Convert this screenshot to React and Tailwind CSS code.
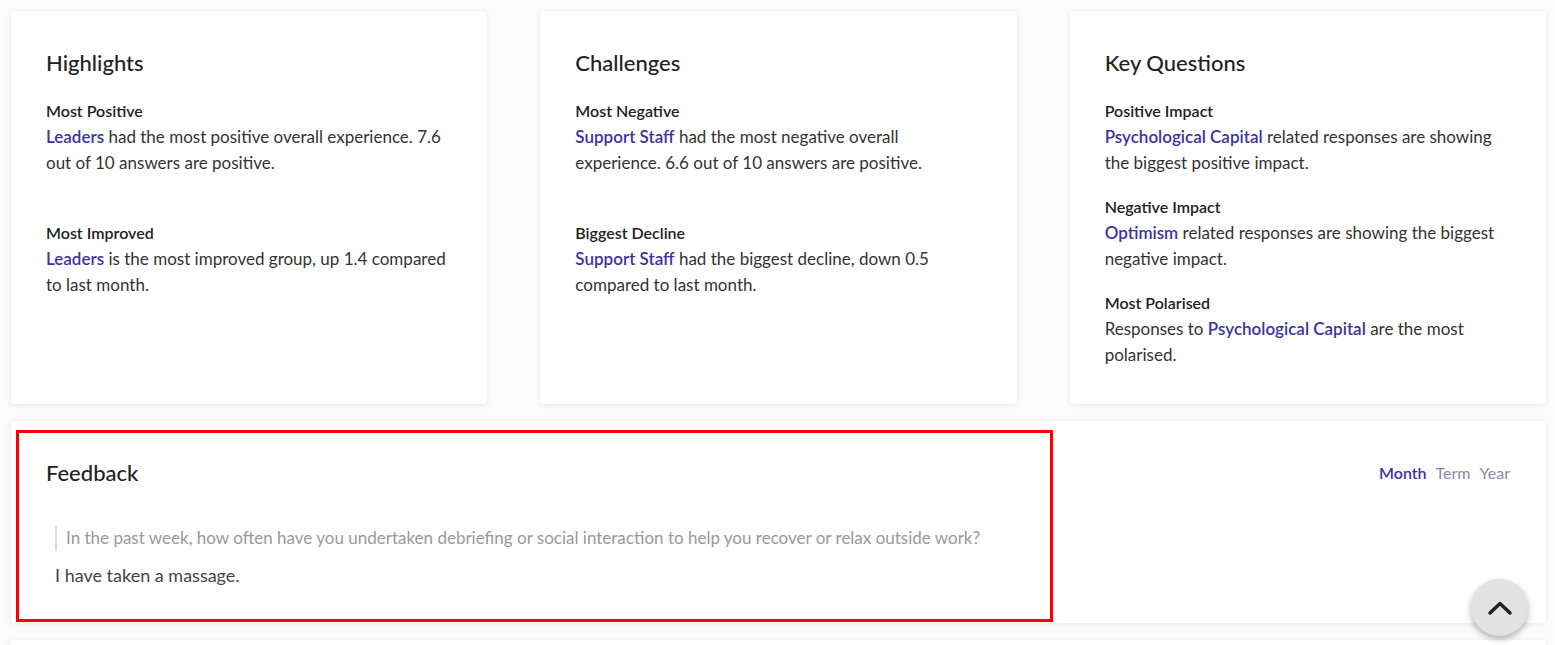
import React from "react";

const L = ({ children }) => (
  <span className="text-[#3d33a0] font-semibold">{children}</span>
);

function Section({ title, children, mb }) {
  return (
    <div className={mb}>
      <div className="text-[16px] leading-[26px] font-semibold text-[#222]">{title}</div>
      <p className="text-[17px] leading-[26px] text-[#333]">{children}</p>
    </div>
  );
}

function Card({ title, children }) {
  return (
    <div className="bg-white rounded-[4px] shadow-[0_1px_6px_rgba(0,0,0,0.08)] pl-[35px] pr-[36px] pt-[38px] pb-[36px]">
      <h2 className="text-[22px] leading-[28px] font-medium text-[#222] mb-[21px]">{title}</h2>
      {children}
    </div>
  );
}

export default function App() {
  return (
    <div
      className="min-h-[645px] bg-[#fbfbfb] pl-[11px] pr-[9px] pt-[11px] pb-[40px]"
      style={{ fontFamily: "Lato, 'Open Sans', sans-serif" }}
    >
      <div className="grid grid-cols-3 gap-[53px] h-[393px]">
        <Card title="Highlights">
          <Section title="Most Positive" mb="mb-[44px]">
            <L>Leaders</L> had the most positive overall experience. 7.6 out of 10 answers are positive.
          </Section>
          <Section title="Most Improved">
            <L>Leaders</L> is the most improved group, up 1.4 compared to last month.
          </Section>
        </Card>
        <Card title="Challenges">
          <Section title="Most Negative" mb="mb-[44px]">
            <L>Support Staff</L> had the most negative overall experience. 6.6 out of 10 answers are positive.
          </Section>
          <Section title="Biggest Decline">
            <L>Support Staff</L> had the biggest decline, down 0.5 compared to last month.
          </Section>
        </Card>
        <Card title="Key Questions">
          <Section title="Positive Impact" mb="mb-[18px]">
            <L>Psychological Capital</L> related responses are showing the biggest positive impact.
          </Section>
          <Section title="Negative Impact" mb="mb-[18px]">
            <L>Optimism</L> related responses are showing the biggest negative impact.
          </Section>
          <Section title="Most Polarised">
            Responses to <L>Psychological Capital</L> are the most polarised.
          </Section>
        </Card>
      </div>

      <div className="relative mt-[17px] h-[202px] bg-white rounded-[4px] shadow-[0_1px_6px_rgba(0,0,0,0.08)] pl-[35px] pr-[36px] pt-[38px]">
        <div className="flex items-center justify-between">
          <h2 className="text-[22px] leading-[28px] font-medium text-[#222]">Feedback</h2>
          <div className="flex gap-[9px] text-[16px] leading-[28px]">
            <span className="font-semibold text-[#3d33a0]">Month</span>
            <span className="text-[#8b87a6]">Term</span>
            <span className="text-[#8b87a6]">Year</span>
          </div>
        </div>
        <div className="pl-[9px] mt-[38px]">
          <div className="border-l-2 border-[#dcdcdc] pl-[9px] text-[17px] leading-[26px] text-[#999]">
            In the past week, how often have you undertaken debriefing or social interaction to help you recover or relax outside work?
          </div>
          <div className="mt-[11px] text-[18px] leading-[26px] text-[#444]">I have taken a massage.</div>
        </div>
        <div className="absolute left-[5px] top-[9px] w-[1037px] h-[192px] border-[3px] border-[#ff0000] pointer-events-none"></div>
      </div>

      <div className="mt-[17px] h-[200px] bg-white rounded-[4px] shadow-[0_1px_6px_rgba(0,0,0,0.08)]"></div>

      <button className="fixed right-[27px] bottom-[9px] w-[57px] h-[57px] rounded-full bg-[#e2e2e2] shadow-[0_3px_6px_rgba(0,0,0,0.3)] flex items-center justify-center">
        <svg width="26" height="18" viewBox="0 0 26 18" fill="none">
          <path d="M3 14 L13 4.5 L23 14" stroke="#222" strokeWidth="3.5" strokeLinecap="round" strokeLinejoin="round" />
        </svg>
      </button>
    </div>
  );
}
